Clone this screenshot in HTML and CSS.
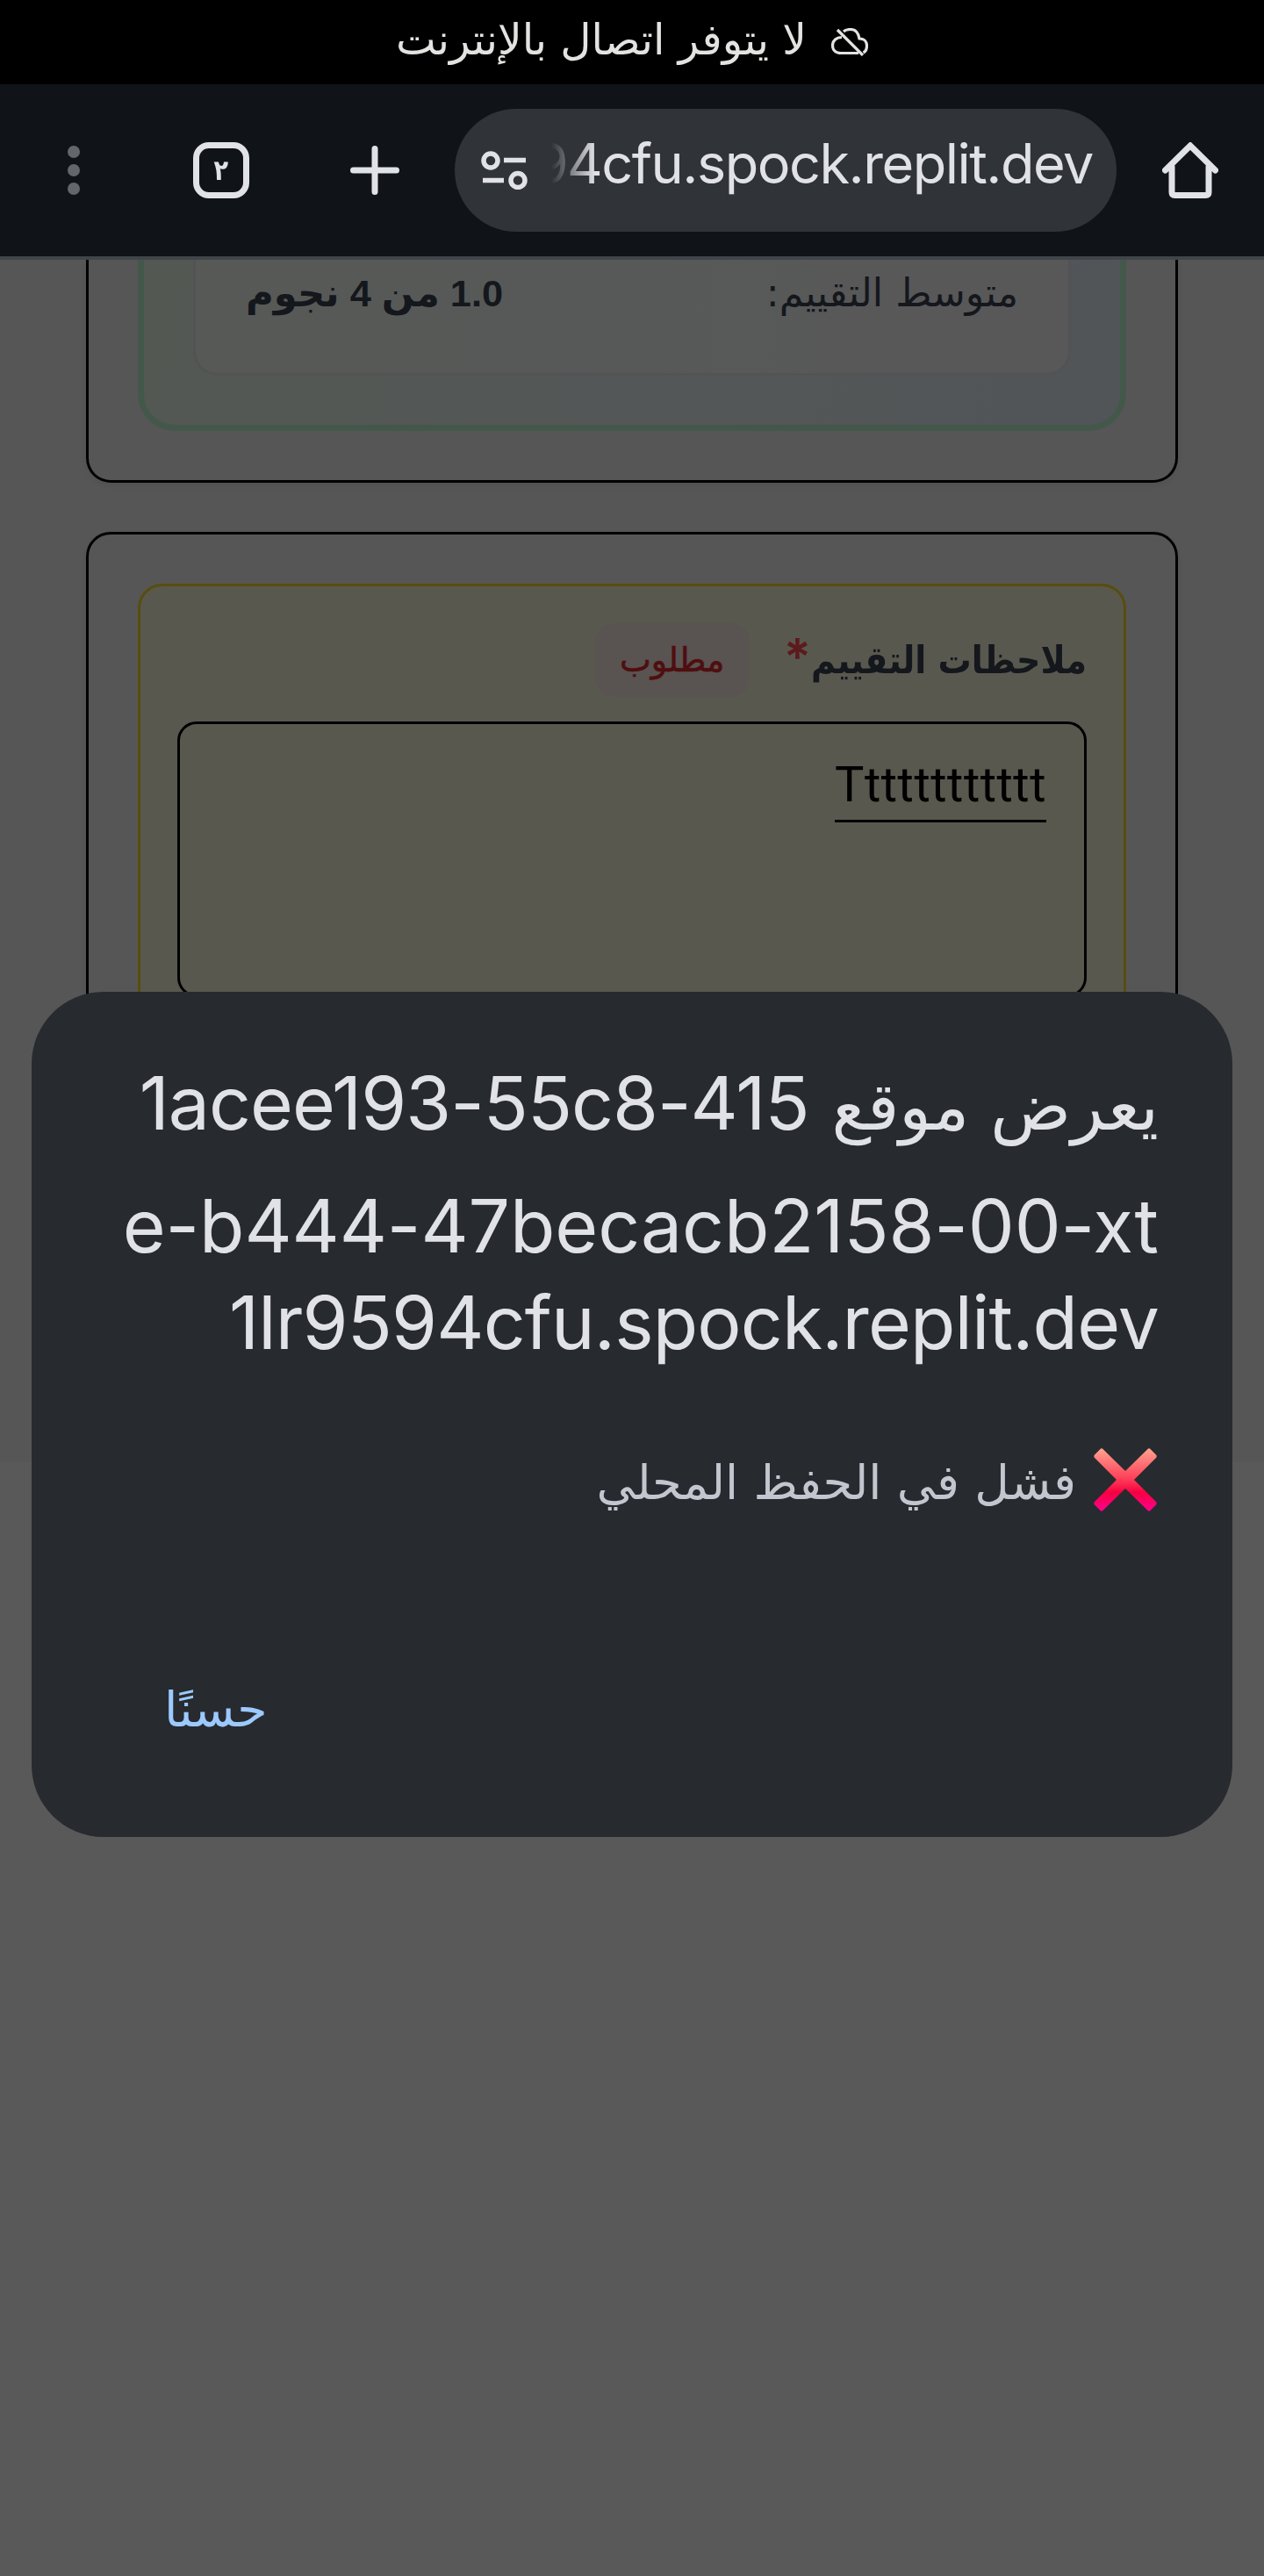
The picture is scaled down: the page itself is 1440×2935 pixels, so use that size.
FILE: index.html
```html
<!DOCTYPE html>
<html lang="ar" dir="rtl">
<head>
<meta charset="utf-8">
<title>ملاحظات التقييم</title>
<link rel="stylesheet" href="styles.css">
</head>
<body>
<div class="screen">
  <header class="status-bar">
    <svg class="status-icon" viewBox="0 0 42 32" preserveAspectRatio="none" aria-hidden="true">
      <path d="M7 2 L36 31 M31 28.500 H11 C5 28.500 1.500 25 1.500 20 C1.500 14 6 10.500 12 10.500 M14 4 C16 2 19 1.500 22 1.500 C28 1.500 31 6 32 12 C38 12 40.500 16 40.500 20 C40.500 24 38.500 27 36.500 28"/>
    </svg>
    <span class="status-text">لا يتوفر اتصال بالإنترنت</span>
  </header>

  <nav class="toolbar">
    <svg class="icon" viewBox="0 0 64 64" aria-hidden="true">
      <path d="M3.500 32 L32 4 L60.500 32 M11 28 V57 Q11 60.500 14.500 60.500 H49.500 Q53 60.500 53 57 V28"/>
    </svg>
    <div class="address" dir="ltr">
      <svg class="site-icon" viewBox="0 0 54 44" aria-hidden="true">
        <circle cx="11" cy="11" r="8"/><path d="M26 10.500H51M2 33.500H26"/><circle cx="42" cy="33.500" r="8"/>
      </svg>
      <div class="url-clip"><span class="url">94cfu.spock.replit.dev</span></div>
    </div>
    <svg class="icon plus" viewBox="0 0 64 64" aria-hidden="true"><path d="M32 7.500V56.500M7.500 32H56.500"/></svg>
    <div class="tabs"><span class="tab-count">٢</span></div>
    <svg class="icon dots" viewBox="0 0 64 64" aria-hidden="true"><circle cx="32" cy="11" r="7"/><circle cx="32" cy="32" r="7"/><circle cx="32" cy="53" r="7"/></svg>
  </nav>

  <main class="page">
    <section class="card card-summary">
      <div class="summary">
        <div class="summary-row">
          <span class="row-label">متوسط التقييم:</span>
          <span class="row-value">1.0 من 4 نجوم</span>
        </div>
      </div>
    </section>
    <section class="card card-notes">
      <div class="notes">
        <div class="notes-head">
          <span class="notes-label">ملاحظات التقييم</span><span class="star">*</span>
          <span class="badge"><span class="badge-text">مطلوب</span></span>
        </div>
        <div class="textarea"><span class="typed" dir="ltr">Tttttttttttt</span></div>
      </div>
    </section>
    <div class="dialog">
      <h1 class="title">
        <span class="line line-1"><span class="title-ar">يعرض موقع</span><span dir="ltr">1acee193-55c8-415</span></span>
        <span class="line line-2"><span dir="ltr">e-b444-47becacb2158-00-xt</span></span>
        <span class="line line-3"><span dir="ltr">1lr9594cfu.spock.replit.dev</span></span>
      </h1>
      <p class="message">
        <svg class="cross" viewBox="0 0 72 72" aria-hidden="true">
          <defs><linearGradient id="cross-fill" x1="0" y1="0" x2="0" y2="72" gradientUnits="userSpaceOnUse"><stop offset="0" stop-color="#ffa48f"/><stop offset=".5" stop-color="#ff3b57"/><stop offset=".7" stop-color="#f50040"/><stop offset="1" stop-color="#ff0090"/></linearGradient></defs>
          <path fill="url(#cross-fill)" d="M7 1.500Q9 -1 11 1.500L36 26L61 1.500Q63 -1 65 1.500L70.500 7Q73 9 70.500 11.500L46 36L70.500 60.500Q73 63 70.500 65L65 70.500Q63 73 61 70.500L36 46L11 70.500Q9 73 7 70.500L1.500 65Q-1 63 1.500 60.500L26 36L1.500 11.500Q-1 9 1.500 7Z"/>
        </svg>
        <span class="msg">فشل في الحفظ المحلي</span>
      </p>
      <div class="actions"><button class="ok">حسنًا</button></div>
    </div>
  </main>
</div>
</body>
</html>
```
FILE: styles.css
```css
* { box-sizing: border-box; }
body {
  margin: 0;
  background: #595959;
  font-family: Inter, "DejaVu Sans", sans-serif;
}
.screen { display: flex; flex-direction: column; width: 1440px; height: 2935px; overflow: hidden; }

.status-bar {
  display: flex; align-items: center; justify-content: center; gap: 28px;
  height: 96px; background: #000; color: #e3e3e1;
}
.status-icon { width: 42px; height: 32px; fill: none; stroke: #e3e3e1; stroke-width: 3.2; }
.status-text { padding-bottom: 6px; font: 48.500px/90px "DejaVu Sans", sans-serif; white-space: nowrap; }

.toolbar {
  display: flex; align-items: center; height: 200px; padding: 0 52px;
  background: #101318; border-bottom: 4px solid #404549;
}
.icon { flex: none; width: 64px; height: 64px; fill: none; stroke: #e1e2e8; stroke-width: 7; stroke-linecap: round; }
.address {
  display: flex; align-items: center; width: 754px; height: 140px; margin-right: 52px;
  padding: 0 27px 0 30px; background: #303338; border-radius: 70px;
}
.site-icon { flex: none; width: 54px; height: 44px; fill: none; stroke: #e1e2e8; stroke-width: 5.500; }
.url-clip {
  display: flex; flex: 1; justify-content: flex-end; height: 100px; margin-left: 26px; overflow: hidden;
  -webkit-mask: linear-gradient(90deg, transparent 0, #000 50px);
  mask: linear-gradient(90deg, transparent 0, #000 50px);
}
.url { color: #e1e2e8; font-size: 63px; line-height: 84px; letter-spacing: -1.500px; white-space: nowrap; }
.plus { margin-right: 59px; }
.tabs {
  display: flex; align-items: center; justify-content: center; width: 64px; height: 64px;
  margin-right: 111px; border: 7px solid #e1e2e8; border-radius: 18px;
}
.tab-count { color: #e1e2e8; font: bold 32px/50px "DejaVu Sans", sans-serif; transform: scaleX(.85); }
.dots { margin-right: 104px; fill: #63666a; stroke: none; }

.page {
  position: relative; flex: 1; padding: 0 98px; overflow: hidden;
  background: linear-gradient(#565656 0 1370px, #595959 1370px);
}
.card { border: 3px solid #000; box-shadow: 0 3px 6px rgba(0, 0, 0, .06); }
.card-summary { height: 254px; padding: 0 56px 56px; border-top: 0; border-radius: 0 0 28px 28px; }
.summary {
  height: 195px; padding: 0 56px 56px; border: 7px solid #43584a; border-top: 0; border-radius: 0 0 42px 42px;
  background: linear-gradient(100deg, #535853, #535757 50%, #515558);
}
.summary-row {
  display: flex; align-items: flex-start; justify-content: space-between; height: 132px; padding: 0 57px;
  border: 3px solid #525355; border-top: 0; border-radius: 0 0 28px 28px;
  background: linear-gradient(90deg, #575957, #575958 50%, #585859 75%);
  color: #14171c; line-height: 76px;
}
.row-label, .notes-label, .badge-text, .msg, .ok, .title-ar { font-family: "DejaVu Sans", sans-serif; white-space: nowrap; }
.row-label { font-size: 44.500px; }
.row-value { font: bold 43.400px/76px "Liberation Sans", "DejaVu Sans", sans-serif; white-space: nowrap; }

.card-notes { height: 700px; margin-top: 56px; padding: 56px; border-radius: 28px; }
.notes { height: 580px; padding: 42px; border: 3px solid #594d0c; border-radius: 28px; background: #59584f; }
.notes-head { display: flex; align-items: center; height: 84px; color: #14171c; }
.notes-label { width: 311px; font-size: 43px; font-weight: bold; transform: scaleX(.885); transform-origin: right; }
.star { margin-right: 3px; padding-bottom: 8px; color: #5c1a1c; font-size: 58px; font-weight: 600; line-height: 74px; }
.badge {
  display: flex; align-items: center; justify-content: center; width: 176px; height: 84px;
  margin-right: 39px; border-radius: 22px; background: #595351;
}
.badge-text { color: #4f0e0f; font-size: 38px; -webkit-text-stroke: .6px #4f0e0f; }
.textarea { height: 314px; margin-top: 28px; padding: 29px 43px; border: 3px solid #000; border-radius: 22px; }
.typed {
  display: inline-block; height: 83px; border-bottom: 3px solid #000; color: #000;
  font: 56px/80px Roboto, sans-serif; letter-spacing: .5px;
}

.dialog {
  position: absolute; top: 834px; left: 36px; width: 1368px; height: 963px; padding: 56px 84px 0;
  border-radius: 82px; background: #272a2f;
}
.title { margin: 0; color: #e1e2e8; font-size: 84px; font-weight: 400; }
.line { display: flex; align-items: baseline; height: 110px; line-height: 110px; white-space: nowrap; }
.line-1 { gap: 26px; height: 141px; margin-bottom: 15px; line-height: 141px; letter-spacing: -1px; }
.line-2 { letter-spacing: -.1px; }
.line-3 { letter-spacing: -.850px; }
.title-ar { font-size: 76px; letter-spacing: 0; }
.message { display: flex; align-items: center; gap: 20px; height: 100px; margin: 74px 0 0; color: #c3c6cf; font-size: 54.400px; }
.msg { margin-top: 6px; }
.cross { flex: none; width: 72px; height: 72px; margin-right: 2px; }
.actions { display: flex; justify-content: flex-end; margin-top: 162px; padding-left: 67px; }
.ok { padding: 0; border: 0; background: none; color: #9ccaff; font-size: 55.500px; line-height: 100px; }
```
